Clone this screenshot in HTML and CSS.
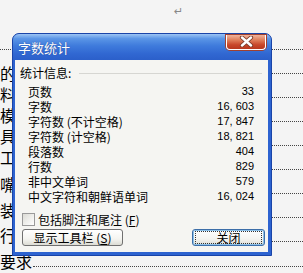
FILE: index.html
```html
<!DOCTYPE html>
<html>
<head>
<meta charset="utf-8">
<link rel="stylesheet" href="styles.css">
</head>
<body>
<div class="doc">
  <div class="para1"><span class="ret">↵</span></div>
  <div class="section">
    <div class="leftcol">
      <div class="g1">的</div>
      <div class="g1">料</div>
      <div class="g1">模</div>
      <div class="g1">具</div>
      <div class="g1 g1-last">工</div>
      <div class="g2">嘴</div>
      <div class="g2">装</div>
      <div class="g2">行</div>
    </div>
    <div class="spacer"></div>
    <div class="rules">
      <div class="rule"></div><div class="rule"></div><div class="rule"></div><div class="rule"></div>
      <div class="rule"></div><div class="rule"></div><div class="rule"></div><div class="rule"></div>
    </div>
  </div>
  <div class="lastline"><span class="req">要求</span><span class="fill"></span></div>
</div>

<div class="dialog">
  <div class="titlebar">
    <span class="title">字数统计</span>
    <span class="close"><svg width="17" height="11" viewBox="0 0 17 11"><path d="M4 1.5 L13 9.5 M13 1.5 L4 9.5" stroke="#7a3a2a" stroke-width="4.2" stroke-linecap="round"/><path d="M4 1.5 L13 9.5 M13 1.5 L4 9.5" stroke="#ffffff" stroke-width="2.4" stroke-linecap="round"/></svg></span>
  </div>
  <div class="content">
    <div class="head"><span>统计信息:</span><span class="sep"></span></div>
    <div class="stats">
      <div class="row"><span>页数</span><span class="num">33</span></div>
      <div class="row"><span>字数</span><span class="num">16, 603</span></div>
      <div class="row"><span>字符数 (不计空格)</span><span class="num">17, 847</span></div>
      <div class="row"><span>字符数 (计空格)</span><span class="num">18, 821</span></div>
      <div class="row"><span>段落数</span><span class="num">404</span></div>
      <div class="row"><span>行数</span><span class="num">829</span></div>
      <div class="row"><span>非中文单词</span><span class="num">579</span></div>
      <div class="row"><span>中文字符和朝鲜语单词</span><span class="num">16, 024</span></div>
    </div>
    <div class="check"><span class="box"></span><span>包括脚注和尾注 (<u>F</u>)</span></div>
    <div class="buttons">
      <span class="btn btn-tool">显示工具栏 (<u>S</u>)</span>
      <span class="btn btn-close"><span class="focus">关闭</span></span>
    </div>
  </div>
</div>
</body>
</html>
```

FILE: styles.css
```css
html, body {
  margin: 0;
  padding: 0;
  background: #f4f4f4;
  width: 303px;
  height: 273px;
  overflow: hidden;
  font-family: "Noto Sans CJK SC", "Liberation Sans", sans-serif;
}

.doc {
  position: relative;
  width: 303px;
  height: 273px;
}

.para1 {
  height: 49px;
  border-bottom: 1px dotted #444;
  position: relative;
}

.ret {
  position: absolute;
  left: 174px;
  top: 5px;
  font-family: "DejaVu Sans", sans-serif;
  font-size: 11px;
  color: #888;
}

.section {
  display: flex;
}

.leftcol {
  flex: none;
  width: 12px;
  overflow: hidden;
  padding-top: 12.5px;
  font-size: 16px;
  color: #000;
}

.g1 {
  line-height: 21px;
  height: 21px;
  width: 12px;
  overflow: hidden;
  white-space: nowrap;
}

.g1-last {
  margin-bottom: 4.75px;
}

.g2 {
  line-height: 25.5px;
  height: 25.5px;
  width: 12px;
  overflow: hidden;
  white-space: nowrap;
}

.spacer {
  flex: 1;
}

.rules {
  width: 60px;
}

.rule {
  height: 23px;
  border-bottom: 1px dotted #444;
}

.lastline {
  display: flex;
  align-items: flex-end;
  height: 25.5px;
  font-size: 16px;
  line-height: 25.5px;
}

.req {
  color: #000;
}

.fill {
  flex: 1;
  margin-left: 1px;
  height: 6px;
  margin-bottom: 7px;
  border-bottom: 1px dotted #444;
}

.dialog {
  position: absolute;
  left: 12px;
  top: 33px;
  width: 260px;
  height: 223px;
  box-sizing: border-box;
  border-radius: 7px 7px 0 0;
  background: #2d63d0;
  border: 1px solid #1a44a8;
  display: flex;
  flex-direction: column;
}

.titlebar {
  height: 26px;
  flex: none;
  border-radius: 6px 6px 0 0;
  background: linear-gradient(#9cc4f4 0%, #5a95e6 18%, #3f7bdc 45%, #3168d2 75%, #2b5fca 100%);
  display: flex;
  align-items: center;
  justify-content: space-between;
  padding: 0 5px 0 5px;
}

.title {
  color: #fff;
  font-size: 13px;
  line-height: 16px;
  margin-top: 2px;
  text-shadow: 0 0 1px #1a3a8a;
}

.close {
  width: 40px;
  height: 15px;
  margin-top: -10px;
  box-sizing: border-box;
  border: 1px solid #ffffff;
  border-top: none;
  border-radius: 0 0 4px 4px;
  background: linear-gradient(#f0b49c 0%, #e0805c 35%, #c8472a 70%, #b8381e 100%);
  display: flex;
  align-items: center;
  justify-content: center;
  box-shadow: 0 0 0 1px #a04030;
}

.content {
  flex: 1;
  margin: 0 3px 3px 2px;
  background: #f5f5f2;
  display: flex;
  flex-direction: column;
  padding: 5px 0 0 5px;
  font-size: 12px;
  color: #000;
}

.head {
  display: flex;
  align-items: center;
  height: 15px;
  line-height: 15px;
}

.sep {
  flex: 1;
  height: 0;
  border-top: 1px solid #d6d6d2;
  margin: 1px 6px 0 8px;
}

.stats {
  margin-top: 4px;
  padding-left: 8px;
  padding-right: 14px;
}

.row {
  display: flex;
  justify-content: space-between;
  height: 15px;
  line-height: 15px;
}

.num {
  font-family: "Liberation Sans", sans-serif;
  font-size: 11px;
}

.check {
  display: flex;
  align-items: center;
  margin-top: 9px;
  padding-left: 2px;
  height: 13px;
  line-height: 13px;
  gap: 3px;
}

.box {
  width: 11px;
  height: 11px;
  border: 1px solid #9a9a9a;
  background: linear-gradient(135deg, #dcdcd6, #ffffff);
}

.buttons {
  display: flex;
  justify-content: space-between;
  margin-top: 3px;
  padding-left: 2px;
  padding-right: 3px;
}

.btn {
  height: 17px;
  box-sizing: border-box;
  border: 1px solid #707070;
  border-radius: 3px;
  background: linear-gradient(#ffffff 0%, #f4f4f0 60%, #dcdcd4 100%);
  display: flex;
  align-items: center;
  justify-content: center;
  font-size: 12px;
  line-height: 13px;
}

.btn-tool {
  width: 101px;
}

.btn-close {
  width: 73px;
  border-color: #3c6ea8;
  box-shadow: inset 0 0 0 1px #8cc0e8;
}

.focus {
  display: flex;
  align-items: center;
  justify-content: center;
  width: 65px;
  height: 11px;
  border: 1px dotted #333;
}
```
